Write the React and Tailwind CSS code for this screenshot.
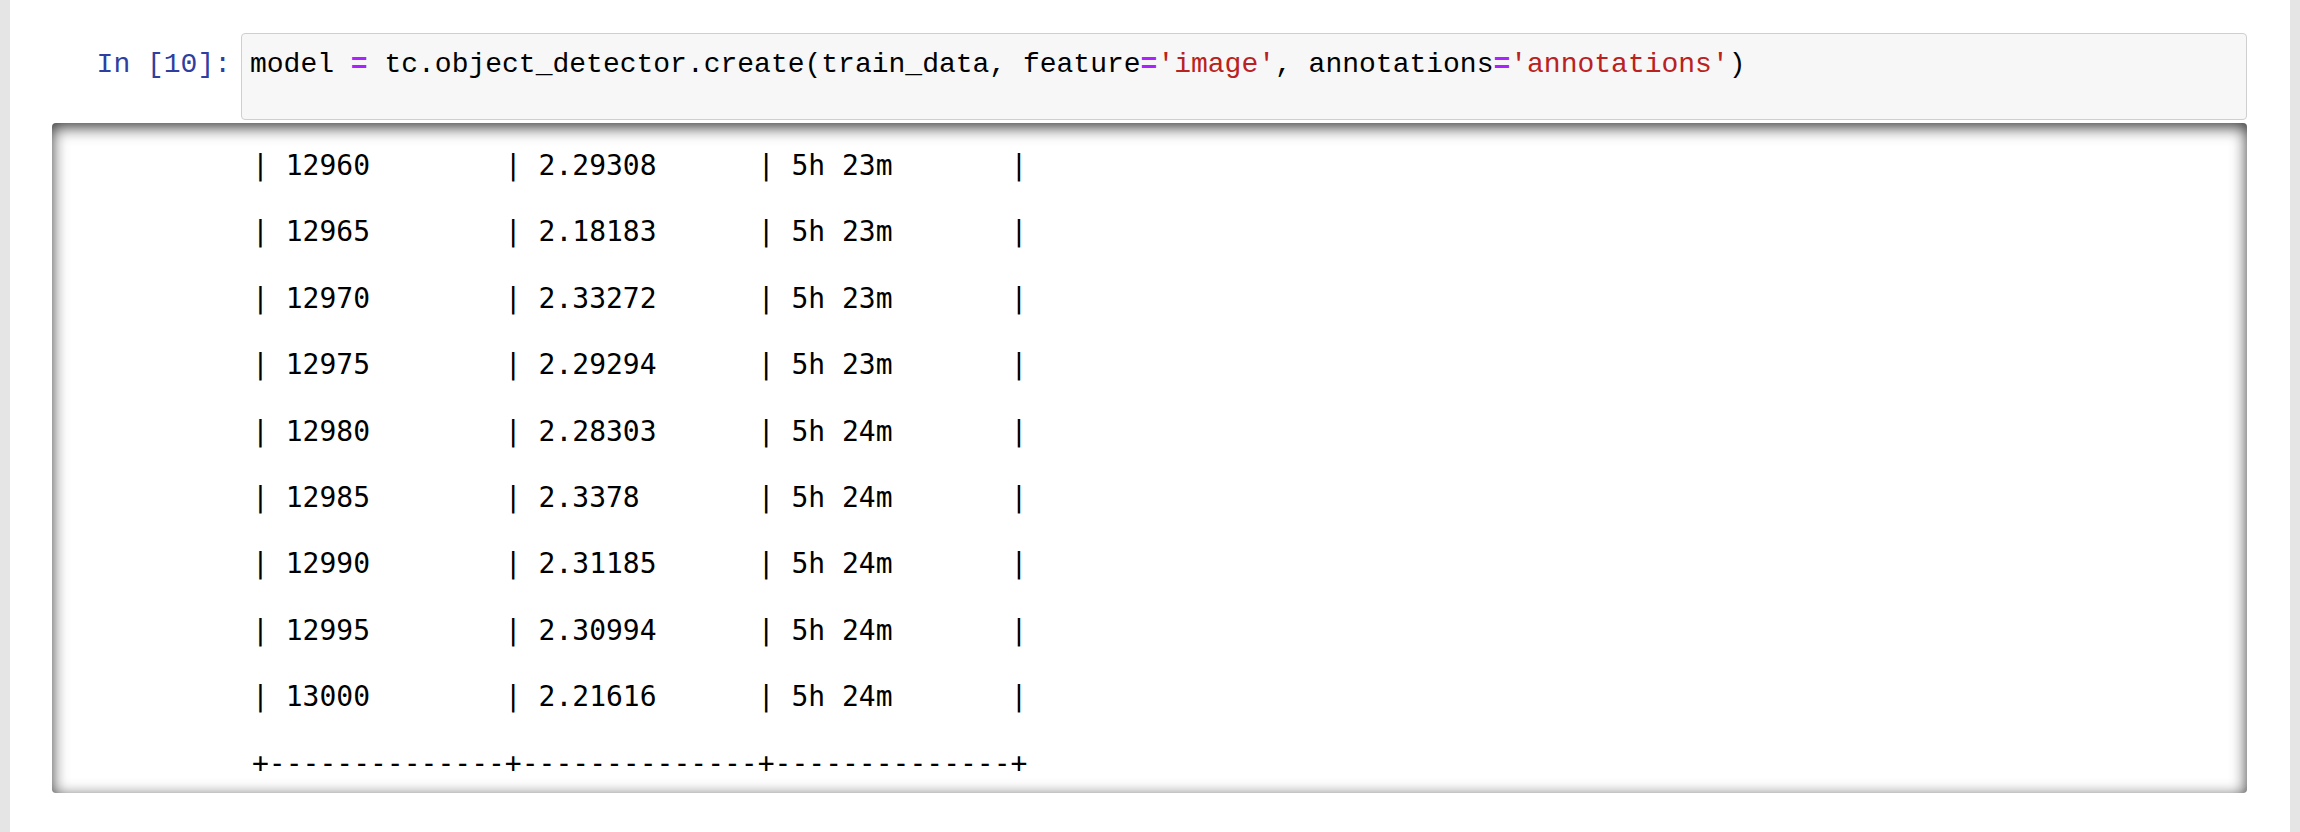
const ROWS = [
  ['12960', '2.29308', '5h 23m'],
  ['12965', '2.18183', '5h 23m'],
  ['12970', '2.33272', '5h 23m'],
  ['12975', '2.29294', '5h 23m'],
  ['12980', '2.28303', '5h 24m'],
  ['12985', '2.3378', '5h 24m'],
  ['12990', '2.31185', '5h 24m'],
  ['12995', '2.30994', '5h 24m'],
  ['13000', '2.21616', '5h 24m'],
]

const cell = (v) => '| ' + v.padEnd(13)
const rule = '+' + '-'.repeat(14) + '+' + '-'.repeat(14) + '+' + '-'.repeat(14) + '+'
const output = ROWS.map((r) => r.map(cell).join('') + '|').join('\n\n') + '\n\n' + rule

const mono = "font-['Liberation_Mono','Courier_New',monospace]"

export default function App() {
  return (
    <div className="flex h-[832px] w-full bg-white">
      <div className="w-[10px] shrink-0 bg-[#e5e5e5]" />
      <div className="flex-1 pl-[42px] pr-[43px] pt-[33px]">
        <div className="flex items-start">
          <div
            className={`w-[189px] shrink-0 pr-[10px] pt-[15px] text-right text-[28px] leading-[33.2px] text-[#303f9f] ${mono}`}
          >
            In&nbsp;[10]:
          </div>
          <div
            className={`h-[87px] flex-1 rounded-[4px] border border-[#cfcfcf] bg-[#f7f7f7] pl-[8px] pt-[14px] text-[28px] leading-[33.2px] text-black whitespace-pre ${mono}`}
          >
            model <span className="font-bold text-[#aa22ff]">=</span> tc.object_detector.create(train_data,
            feature<span className="font-bold text-[#aa22ff]">=</span>
            <span className="text-[#ba2121]">'image'</span>, annotations
            <span className="font-bold text-[#aa22ff]">=</span>
            <span className="text-[#ba2121]">'annotations'</span>)
          </div>
        </div>
        <div className="mt-[3px] h-[670px] rounded-[4px] bg-white shadow-[inset_0_4px_16px_rgba(0,0,0,0.8)]">
          <pre className="pl-[200px] pt-[26px] font-['DejaVu_Sans_Mono',monospace] text-[28px] leading-[33.2px] text-black">
            {output}
          </pre>
        </div>
      </div>
      <div className="w-[10px] shrink-0 bg-[#e5e5e5]" />
    </div>
  )
}
